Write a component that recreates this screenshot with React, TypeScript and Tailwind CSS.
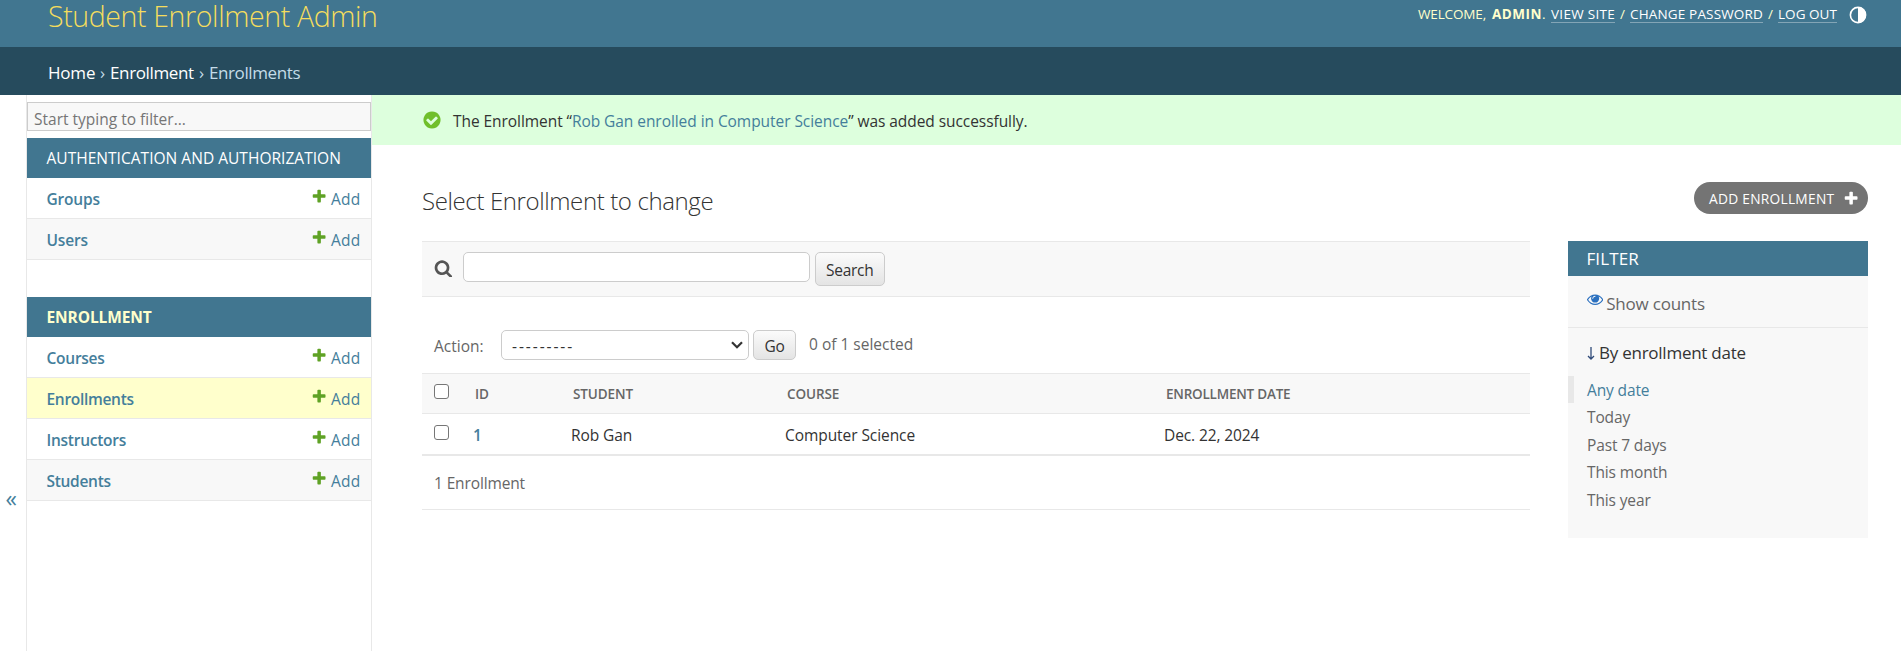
import type { ReactNode } from "react";

const PLUS =
  "M1600 796v192q0 40-28 68t-68 28h-416v416q0 40-28 68t-68 28h-192q-40 0-68-28t-28-68v-416h-416q-40 0-68-28t-28-68v-192q0-40 28-68t68-28h416v-416q0-40 28-68t68-28h192q40 0 68 28t28 68v416h416q40 0 68 28t28 68z";
const SEARCH =
  "M1216 832q0-185-131.5-316.5t-316.5-131.5-316.5 131.5-131.5 316.5 131.5 316.5 316.5 131.5 316.5-131.5 131.5-316.5zm512 832q0 52-38 90t-90 38q-54 0-90-38l-343-342q-179 124-399 124-143 0-273.5-55.5t-225-150-150-225-55.5-273.5 55.5-273.5 150-225 225-150 273.5-55.5 273.5 55.5 225 150 150 225 55.5 273.5q0 220-124 399l343 343q37 37 37 90z";
const CHECK =
  "M1412 734q0-28-18-46l-91-90q-19-19-45-19t-45 19l-408 407-226-226q-19-19-45-19t-45 19l-91 90q-18 18-18 46 0 27 18 45l362 362q19 19 45 19 27 0 46-19l543-543q18-18 18-45zm252 162q0 209-103 385.5t-279.5 279.5-385.5 103-385.5-103-279.5-279.5-103-385.5 103-385.5 279.5-279.5 385.5-103 385.5 103 279.5 279.5 103 385.5z";
const EYE =
  "M1664 960q-152-236-381-353 61 104 61 225 0 185-131.5 316.5t-316.5 131.5-316.5-131.5-131.5-316.5q0-121 61-225-229 117-381 353 133 205 333.5 326.5t434.5 121.5 434.5-121.5 333.5-326.5zm-720-384q0-20-14-34t-34-14q-125 0-214.5 89.5t-89.5 214.5q0 20 14 34t34 14 34-14 14-34q0-86 61-147t147-61q20 0 34-14t14-34zm848 384q0 34-20 69-140 230-376.5 368.5t-499.5 138.5-499.5-139-376.5-368q-20-35-20-69t20-69q140-229 376.5-368t499.5-139 499.5 139 376.5 368q20 35 20 69z";

function Icon({ d, className }: { d: string; className: string }) {
  return (
    <svg viewBox="0 0 1792 1792" fill="currentColor" className={`shrink-0 ${className}`}>
      <path d={d} />
    </svg>
  );
}

function HeaderLink({ className, children }: { className: string; children: ReactNode }) {
  return (
    <a href="#" className={`mt-[5px] h-[18px] border-b border-white/35 leading-[19px] text-white ${className}`}>
      {children}
    </a>
  );
}

function Header() {
  return (
    <header className="flex h-[47px] items-start justify-between bg-[#417690] pl-12 pr-[34px]">
      <h1 className="text-[28.5px] font-light leading-8 tracking-[-0.38px] text-[#f5dd5d]">Student Enrollment Admin</h1>
      <div className="flex whitespace-nowrap text-[13.5px] leading-[29px] text-[#ffffcc]">
        <span className="w-[74px] tracking-[-0.14px]">WELCOME,</span>
        <span className="w-[59px]">
          <strong className="font-bold tracking-[0.5px]">ADMIN</strong>.
        </span>
        <HeaderLink className="w-16 tracking-[0.28px]">VIEW SITE</HeaderLink>
        <span className="w-[15px] text-center">/</span>
        <HeaderLink className="w-[133px] tracking-[0.16px]">CHANGE PASSWORD</HeaderLink>
        <span className="w-[15px] text-center">/</span>
        <HeaderLink className="w-[59px] tracking-[0.05px]">LOG OUT</HeaderLink>
        <svg viewBox="0 0 18 18" className="ml-3 mt-1.5 size-[18px]">
          <circle cx="9" cy="9" r="7.6" fill="none" stroke="#fff" strokeWidth="1.6" />
          <path d="M9 1a8 8 0 0 1 0 16z" fill="#fff" />
        </svg>
      </div>
    </header>
  );
}

function Breadcrumbs() {
  return (
    <nav className="flex h-12 bg-[#264b5d] pl-12 text-[17px] leading-[51px] text-[#c4dce8]">
      <a href="#" className="w-[52px] tracking-[-0.2px] text-white">Home</a>
      <span className="w-[10px]">›</span>
      <a href="#" className="w-[89px] tracking-[-0.36px] text-white">Enrollment</a>
      <span className="w-[10px]">›</span>
      <span className="tracking-[-0.4px]">Enrollments</span>
    </nav>
  );
}

function SidebarRow({ name, tone, spacing }: { name: string; tone: string; spacing: string }) {
  return (
    <div className={`flex h-[41px] border-b border-[#e8e8e8] pl-[19.5px] text-[15.5px] leading-[43px] text-[#447e9b] ${tone}`}>
      <a href="#" className={`flex-1 font-semibold ${spacing}`}>{name}</a>
      <Icon d={PLUS} className="mt-[9.5px] size-[16.25px] text-[#5fa225]" />
      <a href="#" className="ml-1 w-10 tracking-[0.2px]">Add</a>
    </div>
  );
}

function Sidebar() {
  return (
    <div className="flex w-[372px] shrink-0">
      <button className="w-[26px] pl-[5.5px] pt-[251px] text-left text-[23px] text-[#447e9b]">«</button>
      <nav className="w-[346px] border-x border-[#e8e8e8] pt-[7px]">
        <input
          placeholder="Start typing to filter..."
          className="block h-[29px] w-full border border-[#ccc] bg-[#f8f8f8] px-1.5 pt-1 text-[15.5px] outline-none placeholder:text-[#757575]"
        />
        <h2 className="mt-[7px] h-10 bg-[#417690] pl-[19.5px] text-[15.5px] leading-[41px] tracking-[0.03px] text-white">AUTHENTICATION AND AUTHORIZATION</h2>
        <SidebarRow name="Groups" tone="bg-white" spacing="tracking-[-0.2px]" />
        <SidebarRow name="Users" tone="bg-[#f8f8f8]" spacing="tracking-[-0.2px]" />
        <h2 className="mt-[37px] h-10 bg-[#417690] pl-[19.5px] text-[15.5px] font-bold leading-[41px] tracking-[-0.1px] text-[#ffffcc]">ENROLLMENT</h2>
        <SidebarRow name="Courses" tone="bg-white" spacing="tracking-[-0.25px]" />
        <SidebarRow name="Enrollments" tone="bg-[#ffffcc]" spacing="tracking-[-0.3px]" />
        <SidebarRow name="Instructors" tone="bg-white" spacing="tracking-[-0.25px]" />
        <SidebarRow name="Students" tone="bg-[#f8f8f8]" spacing="tracking-[-0.3px]" />
      </nav>
    </div>
  );
}

function Checkbox() {
  return (
    <input
      type="checkbox"
      className="ml-3 mt-2.5 block size-[15px] appearance-none rounded-[3px] border border-[#767676] bg-white"
    />
  );
}

const gradientButton =
  "rounded-[5px] border border-[#ccc] bg-linear-to-b from-[#fbfbfb] to-[#e4e4e4] text-center text-[#333]";

function ChangeList() {
  return (
    <section className="w-[1108px] text-[15.5px] text-[#666]">
      <div className="flex h-14 border-y border-[#e8e8e8] bg-[#f8f8f8] pl-3 pt-2.5">
        <Icon d={SEARCH} className="mt-[6.7px] size-[18.75px] text-[#555]" />
        <input className="ml-2.5 h-[30px] w-[347px] rounded-[5px] border border-[#ccc] bg-white px-2 outline-none" />
        <button className={`ml-[5px] h-[34px] w-[70px] pt-0.5 leading-[31px] tracking-[-0.3px] ${gradientButton}`}>Search</button>
      </div>
      <div className="flex h-[76px] pl-3 pt-[33px]">
        <span className="w-[67px] leading-[33px]">Action:</span>
        <button className="flex h-[30px] w-[248px] items-center justify-between rounded-[5px] border border-[#ccc] bg-white pl-[10px] pr-[5px] text-[#333]">
          <span className="pt-[3px] tracking-[1.92px]">---------</span>
          <svg viewBox="0 0 12 8" className="w-3" fill="none" stroke="#333" strokeWidth="2.2">
            <path d="M1 1.2l5 5 5-5" />
          </svg>
        </button>
        <button className={`ml-1 h-[30px] w-[43px] pt-0.5 leading-[27px] tracking-[-0.2px] ${gradientButton}`}>Go</button>
        <span className="ml-[13px] leading-[29px]">0 of 1 selected</span>
      </div>
      <table className="w-full table-fixed border-collapse text-left">
        <colgroup>
          <col className="w-[51px]" />
          <col className="w-[98px]" />
          <col className="w-[214px]" />
          <col className="w-[379px]" />
          <col />
        </colgroup>
        <thead>
          <tr className="h-[41px] bg-[#f8f8f8] align-top text-[13.5px] shadow-[inset_0_1px_#e8e8e8,inset_0_-1px_#e8e8e8]">
            <th className="p-0 pt-px"><Checkbox /></th>
            <th className="p-0 pl-0.5 pt-0.5 font-semibold leading-[39px]">ID</th>
            <th className="p-0 pl-0.5 pt-0.5 font-semibold leading-[39px] tracking-[-0.1px]">STUDENT</th>
            <th className="p-0 pl-0.5 pt-0.5 font-semibold leading-[39px] tracking-[-0.1px]">COURSE</th>
            <th className="p-0 pl-0.5 pt-0.5 font-semibold leading-[39px] tracking-[-0.22px]">ENROLLMENT DATE</th>
          </tr>
        </thead>
        <tbody>
          <tr className="h-[42px] align-top text-[#333] shadow-[inset_0_-2px_#e8e8e8]">
            <td className="p-0 pt-px"><Checkbox /></td>
            <td className="p-0 font-semibold leading-[42px] text-[#447e9b]">1</td>
            <td className="p-0 leading-[42px] tracking-[-0.1px]">Rob Gan</td>
            <td className="p-0 leading-[42px] tracking-[-0.07px]">Computer Science</td>
            <td className="p-0 leading-[42px] tracking-[-0.1px]">Dec. 22, 2024</td>
          </tr>
        </tbody>
      </table>
      <p className="h-[54px] border-b border-[#e8e8e8] pl-3 leading-[55px] tracking-[-0.13px]">1 Enrollment</p>
    </section>
  );
}

const dates = ["Any date", "Today", "Past 7 days", "This month", "This year"];

function FilterPanel() {
  return (
    <aside className="h-[297px] w-[300px] bg-[#f8f8f8] text-[17px] text-[#666]">
      <h2 className="h-[35px] bg-[#417690] pl-[18.5px] leading-9 tracking-[0.1px] text-white">FILTER</h2>
      <div className="flex h-[52px] border-b border-[#e8e8e8] pl-[19px]">
        <Icon d={EYE} className="mt-[14.9px] size-[16.25px] text-[#2b70bf]" />
        <a href="#" className="ml-[3px] leading-[55px] tracking-[-0.22px]">Show counts</a>
      </div>
      <h3 className="flex h-12 items-start pl-[19px] leading-[49px] tracking-[-0.25px] text-[#333]">
        <svg viewBox="0 0 8 13" className="mr-1 mt-[19px] h-[13px] w-2" fill="none" stroke="#2f4a78" strokeWidth="1.3">
          <path d="M4 0v11.8M1 9l3 3 3-3" />
        </svg>
        By enrollment date
      </h3>
      <ul className="text-[15.5px]">
        {dates.map((date, i) => (
          <li
            key={date}
            className={`h-[27.4px] border-l-[6px] pl-[13px] leading-[29.4px] tracking-[-0.13px] ${
              i === 0 ? "border-[#e8e8e8] text-[#447e9b]" : "border-transparent"
            }`}
          >
            {date}
          </li>
        ))}
      </ul>
    </aside>
  );
}

export default function App() {
  return (
    <div className="flex h-[651px] w-[1901px] flex-col overflow-hidden bg-white font-['Open_Sans','Noto_Sans',sans-serif] text-[#333]">
      <Header />
      <Breadcrumbs />
      <div className="flex flex-1">
        <Sidebar />
        <main className="flex-1">
          <p className="flex h-[50px] bg-[#ddffdd] pl-[50px] text-[15.5px] leading-[52px] tracking-[-0.06px]">
            <Icon d={CHECK} className="mr-[11px] mt-[15px] size-5 text-[#70bf2b]" />
            <span>
              The Enrollment “<a href="#" className="text-[#447e9b]">Rob Gan enrolled in Computer Science</a>” was added successfully.
            </span>
          </p>
          <div className="flex h-24 justify-between pl-[50px] pr-[33px]">
            <h1 className="pt-[37px] text-[24px] font-light leading-[38px] tracking-[-0.38px]">Select Enrollment to change</h1>
            <a
              href="#"
              className="mt-[37px] flex h-8 w-[174px] rounded-full bg-[#747474] pl-[15px] text-[13.75px] leading-[34px] tracking-[0.26px] text-white"
            >
              <span className="w-[134px] whitespace-nowrap">ADD ENROLLMENT</span>
              <Icon d={PLUS} className="mt-[7.6px] size-[16.25px]" />
            </a>
          </div>
          <div className="flex justify-between pl-[50px] pr-[33px]">
            <ChangeList />
            <FilterPanel />
          </div>
        </main>
      </div>
    </div>
  );
}
